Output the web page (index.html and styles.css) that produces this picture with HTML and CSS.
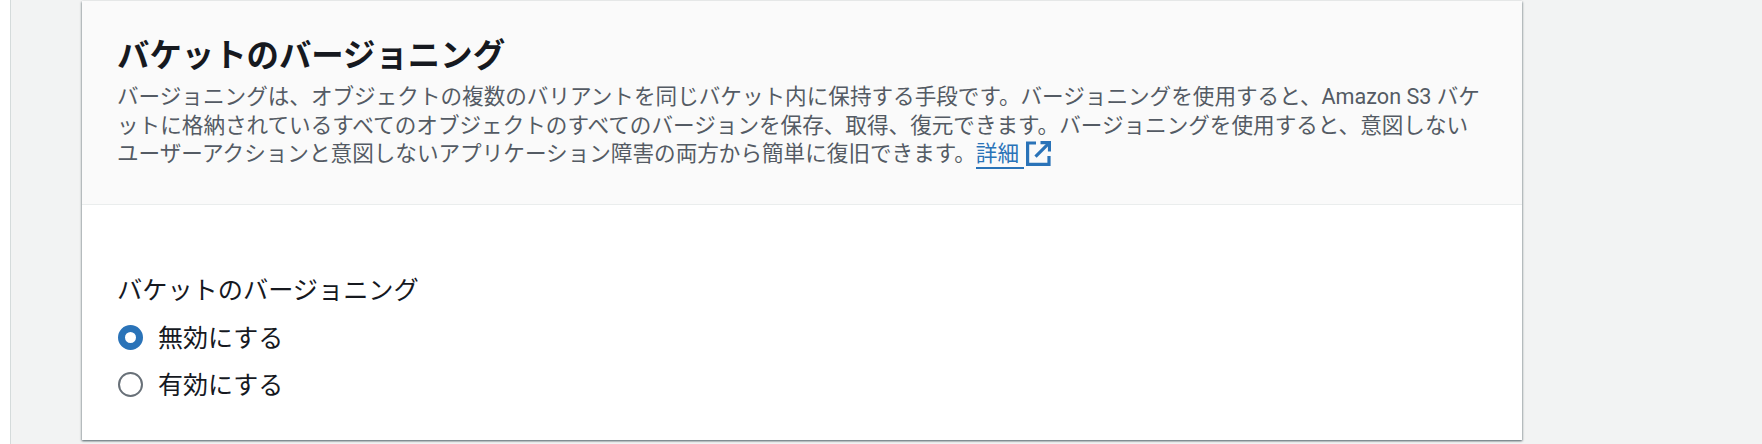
FILE: index.html
```html
<!DOCTYPE html>
<html lang="ja">

<head>
    <meta charset="UTF-8">
    <meta name="viewport" content="width=device-width, initial-scale=1.0">
    <title>バケットのバージョニング</title>
    <link rel="stylesheet" href="styles.css">
</head>

<body>
    <div class="side-strip"></div>

    <main class="content">
        <section class="card">
            <div class="card-header">
                <h2 class="card-title">バケットのバージョニング</h2>
                <p class="card-desc">
                    バージョニングは、オブジェクトの複数のバリアントを同じバケット内に保持する手段です。バージョニングを使用すると、Amazon S3 バケ<br>
                    ットに格納されているすべてのオブジェクトのすべてのバージョンを保存、取得、復元できます。バージョニングを使用すると、意図しない<br>
                    ユーザーアクションと意図しないアプリケーション障害の両方から簡単に復旧できます。<a class="info-link" href="#">詳細 </a><svg class="external-icon" viewBox="0 0 25 25" fill="none" stroke="#2a73b8" stroke-width="3.2">
                        <path d="M10 2H1.6v21.4h21.4V15"/>
                        <path d="M14.5 1.6h9v9"/>
                        <path d="M23.5 1.6 9.5 15.6"/>
                    </svg>
                </p>
            </div>

            <div class="card-body">
                <div class="field-label">バケットのバージョニング</div>
                <label class="radio-row">
                    <span class="radio radio-checked"></span>
                    無効にする
                </label>
                <label class="radio-row">
                    <span class="radio"></span>
                    有効にする
                </label>
            </div>
        </section>
    </main>
</body>

</html>
```

FILE: styles.css
```css
html, body {
    height: 100%;
}

body {
    font-family: Roboto, "Noto Sans CJK JP", sans-serif;
    margin: 0;
    padding: 0;
    display: flex;
    width: 1762px;
    height: 444px;
    overflow: hidden;
    background-color: #f2f3f3;
    color: #16191f;
}

.side-strip {
    width: 10px;
    flex: none;
    background-color: #ffffff;
    border-right: 1px solid #d5dbdb;
}

.content {
    flex: 1;
    padding: 1px 0 0 71px;
}

.card {
    width: 1440px;
    height: 439px;
    background-color: #ffffff;
    box-shadow: 0 1px 2px rgba(0, 28, 36, 0.5), 1px 1px 2px rgba(0, 28, 36, 0.15), -1px 1px 2px rgba(0, 28, 36, 0.15);
}

.card-header {
    height: 204px;
    box-sizing: border-box;
    padding: 33px 35px 0;
    background-color: #fafafa;
    border-bottom: 1px solid #eaeded;
}

.card-title {
    margin: 0 0 5px;
    font-size: 32.4px;
    line-height: 44px;
    font-weight: 700;
}

.card-desc {
    margin: 0;
    font-size: 21.6px;
    line-height: 28.7px;
    color: #545b64;
    white-space: nowrap;
}

.info-link {
    color: #2a73b8;
    text-decoration: none;
    border-bottom: 2px solid #2a73b8;
    padding-bottom: 1px;
}

.external-icon {
    width: 25px;
    height: 25px;
    vertical-align: -5px;
    margin-left: 2px;
}

.card-body {
    padding: 68px 36px 0;
}

.field-label {
    font-size: 25.2px;
    line-height: 36px;
    margin: 0 0 4px -1px;
}

.radio-row {
    display: flex;
    align-items: center;
    gap: 15px;
    height: 45px;
    padding-bottom: 2px;
    font-size: 25px;
}

.radio {
    width: 25px;
    height: 25px;
    margin-top: 4px;
    box-sizing: border-box;
    border: 2px solid #687078;
    border-radius: 50%;
    background-color: #ffffff;
}

.radio-checked {
    border: 7.5px solid #2a73b8;
}
```
